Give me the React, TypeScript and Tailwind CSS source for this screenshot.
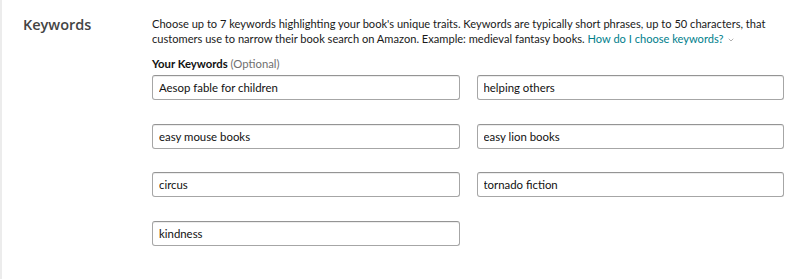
import { ChevronDown } from "lucide-react";

const keywords = [
  "Aesop fable for children",
  "helping others",
  "easy mouse books",
  "easy lion books",
  "circus",
  "tornado fiction",
  "kindness",
];

function KeywordInput({ value }: { value: string }) {
  return (
    <input
      type="text"
      defaultValue={value}
      className="h-[25px] w-full rounded-[3px] border border-[#a6a6a6] border-t-[#949494] bg-white px-[6px] text-[11.4px] text-[#111] shadow-[inset_0_1px_0_rgba(0,0,0,0.07)] outline-none"
      style={{ fontFamily: "Lato, sans-serif" }}
    />
  );
}

export default function App() {
  return (
    <div
      className="flex h-[279px] w-[800px] border-l-2 border-[#ececec] bg-white"
      style={{ fontFamily: 'Lato, "Open Sans", sans-serif' }}
    >
      <div className="w-[150px] shrink-0 pl-[21px] pt-[14px]">
        <h2
          className="text-[14.5px] font-semibold text-[#444]"
          style={{ fontFamily: '"Open Sans", sans-serif' }}
        >
          Keywords
        </h2>
      </div>
      <div className="w-[632px] pt-[16px]">
        <p className="whitespace-nowrap text-[11.1px] leading-[15px] text-[#1a1a1a]">
          Choose up to 7 keywords highlighting your book's unique traits. Keywords are typically short phrases, up to 50 characters, that
          <br />
          customers use to narrow their book search on Amazon. Example: medieval fantasy books.{" "}
          <a href="#" className="text-[#00808c]">
            How do I choose keywords?
          </a>
          <ChevronDown className="ml-[3px] inline-block h-[8px] w-[8px] text-[#888]" strokeWidth={2} />
        </p>
        <div className="mt-[10px] text-[11.3px] leading-[15px] text-[#111]">
          <span className="font-bold">Your Keywords</span>{" "}
          <span className="text-[#6f6f6f]">(Optional)</span>
        </div>
        <div className="mt-[4px] grid grid-cols-2 gap-x-[17px] gap-y-[23.5px]">
          {keywords.map((k) => (
            <KeywordInput key={k} value={k} />
          ))}
        </div>
      </div>
    </div>
  );
}
